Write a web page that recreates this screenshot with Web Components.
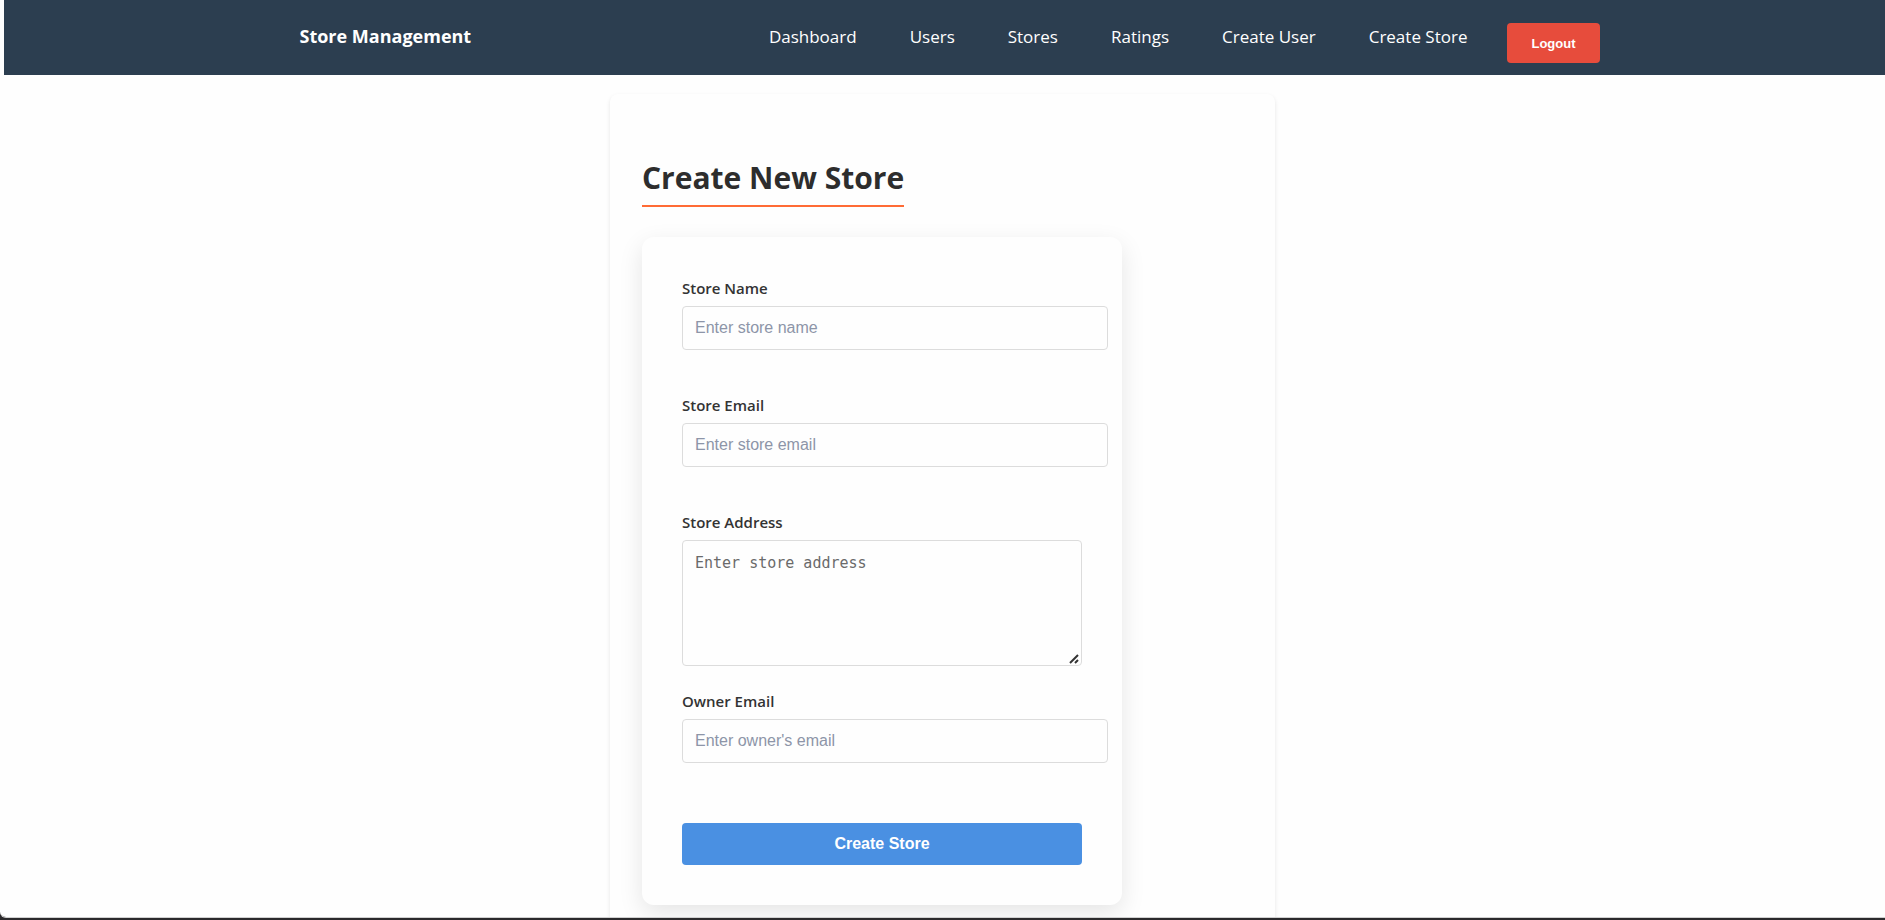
<!DOCTYPE html>
<html lang="en">
<head>
<meta charset="utf-8">
<meta name="viewport" content="width=device-width, initial-scale=1">
<title>Store Management</title>
<style>
  html, body { height: 100%; }
  body {
    margin: 0;
    background: #2b2a2c;
    color: #2d2d2d;
    font-family: "Open Sans", "Noto Sans", sans-serif;
  }
</style>
</head>
<body>
<store-app>
  <site-nav slot="nav" brand="Store Management">
    <nav-link href="#dashboard">Dashboard</nav-link>
    <nav-link href="#users">Users</nav-link>
    <nav-link href="#stores">Stores</nav-link>
    <nav-link href="#ratings">Ratings</nav-link>
    <nav-link href="#create-user">Create User</nav-link>
    <nav-link href="#create-store">Create Store</nav-link>
  </site-nav>
  <page-panel heading="Create New Store">
    <store-form></store-form>
  </page-panel>
</store-app>

<script>
  const define = (name, html, setup) => {
    const template = document.createElement('template');
    template.innerHTML = html;
    customElements.define(name, class extends HTMLElement {
      constructor() {
        super();
        this.attachShadow({ mode: 'open' }).append(template.content.cloneNode(true));
      }
      connectedCallback() {
        if (setup) setup(this, this.shadowRoot);
      }
    });
  };

  define('store-app', `
    <style>
      :host {
        display: flex;
        flex-direction: column;
        height: 100vh;
        box-sizing: border-box;
        padding-bottom: 2px;
      }
      .view {
        flex: 1;
        min-height: 0;
        box-sizing: border-box;
        overflow-y: auto;
        scrollbar-width: none;
        background: #fefefe;
        border-bottom: 1px solid #d0d0d0;
        border-bottom-left-radius: 6px;
      }
      main { padding: 19px 16px 0; }
    </style>
    <div class="view">
      <slot name="nav"></slot>
      <main><slot></slot></main>
    </div>
  `);

  define('site-nav', `
    <style>
      :host { display: block; margin-left: 4px; background: #2c3e50; }
      header {
        display: flex;
        justify-content: space-between;
        align-items: flex-start;
        box-sizing: border-box;
        max-width: 1310px;
        min-height: 75px;
        margin: 0 auto;
        padding: 23px 0 12px 10px;
      }
      .brand { color: #fff; font-size: 18px; line-height: 26px; font-weight: 700; text-decoration: none; }
      nav { display: flex; align-items: flex-start; gap: 24px; }
      .links { display: flex; gap: 21px; }
      button {
        height: 40px;
        padding: 0 24px;
        border: 0;
        border-radius: 4px;
        background: #e74c3c;
        color: #fff;
        font: 700 13px/15px "Liberation Sans", Arial, sans-serif;
        cursor: pointer;
      }
    </style>
    <header>
      <a class="brand" href="#home"></a>
      <nav>
        <div class="links"><slot></slot></div>
        <button type="button">Logout</button>
      </nav>
    </header>
  `, (host, root) => {
    root.querySelector('.brand').textContent = host.getAttribute('brand');
  });

  define('nav-link', `
    <style>
      :host { display: block; }
      a {
        display: block;
        padding: 0 16px;
        color: #fff;
        font-size: 17px;
        line-height: 28px;
        text-decoration: none;
        white-space: nowrap;
      }
    </style>
    <a><slot></slot></a>
  `, (host, root) => {
    root.querySelector('a').href = host.getAttribute('href');
  });

  define('page-panel', `
    <style>
      :host {
        display: block;
        box-sizing: border-box;
        max-width: 665px;
        margin: 0 auto;
        padding: 64px 32px 32px;
        border-radius: 8px;
        background: #fefefe;
        box-shadow: 0 2px 4px rgba(0, 0, 0, 0.1);
      }
      h1 {
        width: fit-content;
        margin: 0 0 30px;
        padding-bottom: 8px;
        border-bottom: 2px solid #ff6b35;
        font-size: 30px;
        line-height: 39px;
        font-weight: 700;
      }
    </style>
    <h1></h1>
    <slot></slot>
  `, (host, root) => {
    root.querySelector('h1').textContent = host.getAttribute('heading');
  });

  define('form-field', `
    <style>
      :host { display: block; }
      label {
        display: block;
        margin-bottom: 6px;
        color: #333;
        font-size: 15px;
        line-height: 23px;
        font-weight: 600;
      }
      input, textarea {
        display: block;
        width: 100%;
        padding: 12px;
        border: 1px solid #dcdcdc;
        border-radius: 4px;
        background: #fefefe;
        color: #2d2d2d;
        outline: none;
      }
      input {
        box-sizing: content-box;
        height: 18px;
        font: 16px/18px "Liberation Sans", Arial, sans-serif;
      }
      input::placeholder { color: #8d95a8; opacity: 1; }
      textarea {
        box-sizing: border-box;
        height: 126px;
        resize: vertical;
        font: 15px/20px "DejaVu Sans Mono", monospace;
      }
      textarea::placeholder { color: #6a6a6a; opacity: 1; }
      textarea::-webkit-resizer {
        background: url("data:image/svg+xml,%3Csvg xmlns='http://www.w3.org/2000/svg' width='15' height='15'%3E%3Cpath d='M4 13L12 5M9 13L12 10' stroke='%23333' stroke-width='2' fill='none'/%3E%3C/svg%3E") no-repeat right bottom;
      }
      .error { min-height: 20px; }
      :host([multiline]) .error { display: none; }
    </style>
    <label for="control"></label>
    <div class="error" role="alert"></div>
  `, (host, root) => {
    const label = root.querySelector('label');
    label.textContent = host.getAttribute('label');
    const control = document.createElement(host.hasAttribute('multiline') ? 'textarea' : 'input');
    control.id = 'control';
    control.placeholder = host.getAttribute('placeholder');
    if (host.hasAttribute('type')) control.type = host.getAttribute('type');
    label.after(control);
  });

  define('store-form', `
    <style>
      :host { display: block; }
      form {
        display: flex;
        flex-direction: column;
        gap: 24px;
        box-sizing: border-box;
        max-width: 480px;
        padding: 40px;
        border-radius: 12px;
        background: #fefefe;
        box-shadow: 0 8px 24px rgba(0, 0, 0, 0.1);
      }
      button {
        height: 42px;
        margin-top: 16px;
        border: 0;
        border-radius: 4px;
        background: #4a90e2;
        color: #fff;
        font: 700 16px/18px "Liberation Sans", Arial, sans-serif;
        cursor: pointer;
      }
    </style>
    <form>
      <form-field label="Store Name" placeholder="Enter store name" type="text"></form-field>
      <form-field label="Store Email" placeholder="Enter store email" type="email"></form-field>
      <form-field label="Store Address" placeholder="Enter store address" multiline></form-field>
      <form-field label="Owner Email" placeholder="Enter owner's email" type="email"></form-field>
      <button type="submit">Create Store</button>
    </form>
  `);
</script>
</body>
</html>
